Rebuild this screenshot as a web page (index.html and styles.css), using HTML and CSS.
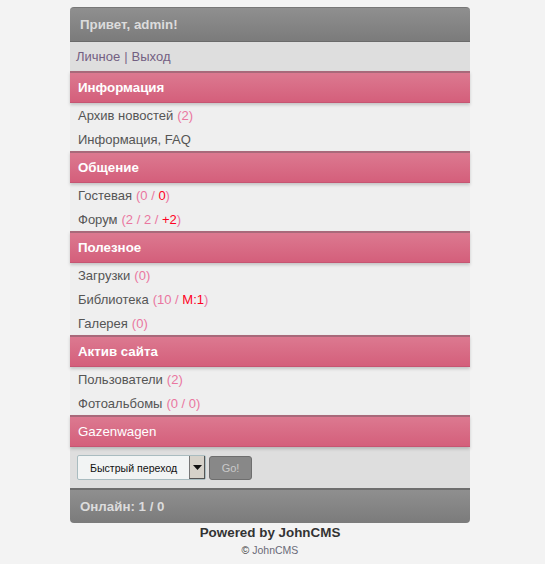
FILE: index.html
```html
<!DOCTYPE html>
<html lang="ru">
<head>
<meta charset="utf-8">
<title>JohnCMS</title>
<link rel="stylesheet" href="styles.css">
</head>
<body>
<div class="wrap">
  <div class="box">
    <div class="hdr top">Привет, admin!</div>
    <div class="menu"><a href="#">Личное</a> | <a href="#">Выход</a></div>

    <div class="phdr">Информация</div>
    <div class="item">Архив новостей <span class="c">(2)</span></div>
    <div class="item">Информация, FAQ</div>

    <div class="phdr">Общение</div>
    <div class="item">Гостевая <span class="c">(0 / <span class="r">0</span>)</span></div>
    <div class="item">Форум <span class="c">(2 / 2 / <span class="r">+2</span>)</span></div>

    <div class="phdr">Полезное</div>
    <div class="item">Загрузки <span class="c">(0)</span></div>
    <div class="item">Библиотека <span class="c">(10 / <span class="r">M:1</span>)</span></div>
    <div class="item">Галерея <span class="c">(0)</span></div>

    <div class="phdr">Актив сайта</div>
    <div class="item">Пользователи <span class="c">(2)</span></div>
    <div class="item">Фотоальбомы <span class="c">(0 / 0)</span></div>

    <div class="phdr thin">Gazenwagen</div>

    <div class="form">
      <div class="sel"><span class="sel-text">Быстрый переход</span><span class="arrow"><svg width="9" height="5" viewBox="0 0 9 5"><path d="M0 0H9L4.5 5Z" fill="#111"/></svg></span></div>
      <div class="go">Go!</div>
    </div>

    <div class="hdr bottom">Онлайн: 1 / 0</div>
  </div>
  <div class="powered">Powered by JohnCMS</div>
  <div class="copy">© <span class="cl">JohnCMS</span></div>
</div>
</body>
</html>
```

FILE: styles.css
```css
* { box-sizing: border-box; }
html, body { margin: 0; padding: 0; }
body {
  background: #f3f3f3;
  font-family: "Liberation Sans", Arial, sans-serif;
  font-size: 13px;
  color: #555;
}
.wrap {
  width: 400px;
  margin: 7px 0 0 70px;
}
.box {
  background: #efefef;
  border-radius: 4px;
}
.hdr {
  height: 35px;
  padding: 0 10px;
  display: flex;
  align-items: center;
  font-weight: bold;
  font-size: 13.3px;
  color: #dcdcdc;
  background: linear-gradient(#8f8f8f, #7b7b7b);
}
.hdr.top {
  border-radius: 4px 4px 0 0;
  border-bottom: 1px solid #6a6a6a;
  border-top: 1px solid #777;
}
.hdr.bottom {
  border-radius: 0 0 4px 4px;
  border-top: 2px solid #6e6e6e;
}
.menu {
  height: 29px;
  background: #dedede;
  padding: 0 6px;
  display: flex;
  align-items: center;
  color: #7a6a88;
  gap: 4px;
  font-size: 13px;
}
.menu a { color: #735f82; text-decoration: none; }
.phdr {
  position: relative;
  height: 32px;
  padding: 0 8px;
  display: flex;
  align-items: center;
  font-weight: bold;
  font-size: 13.3px;
  color: #fff;
  background: linear-gradient(#dc7990, #d45f7b);
  border-top: 2px solid #a8697a;
  border-bottom: 1px solid #c65572;
  box-shadow: 0 2px 3px rgba(0,0,0,0.18);
  z-index: 1;
}
.phdr.thin { font-weight: normal; }
.item {
  height: 24px;
  padding: 0 8px;
  display: flex;
  align-items: center;
  color: #555;
  font-size: 13px;
}
.c { color: #ea76a0; margin-left: 4px; white-space: pre; }
.r { color: #ff0022; }
.form {
  background: #dedede;
  height: 41px;
  padding: 0 7px;
  display: flex;
  align-items: center;
  gap: 3px;
}
.sel {
  width: 129px;
  height: 25px;
  display: flex;
  border: 1px solid #a9bcc0;
  border-radius: 2px;
  background: #f2f4f4;
}
.sel-text {
  flex: 1;
  display: flex;
  align-items: center;
  padding-left: 12px;
  font-size: 10.6px;
  color: #111;
}
.arrow {
  width: 16px;
  display: flex;
  align-items: center;
  justify-content: center;
  background: #d6d2ca;
  border-left: 1px solid #777;
  border-right: 1px solid #555;
  border-bottom: 1px solid #555;
}
.go {
  width: 43px;
  height: 24px;
  display: flex;
  align-items: center;
  justify-content: center;
  background: #888;
  border: 1px solid #6e6e6e;
  border-radius: 3px;
  color: #cacaca;
  font-size: 11px;
}
.powered {
  text-align: center;
  font-weight: bold;
  font-size: 13.4px;
  color: #333;
  margin-top: 2px;
  line-height: 16px;
}
.copy {
  text-align: center;
  font-size: 10.5px;
  color: #333;
  margin-top: 3px;
}
.cl { color: #6a6a78; }
```
